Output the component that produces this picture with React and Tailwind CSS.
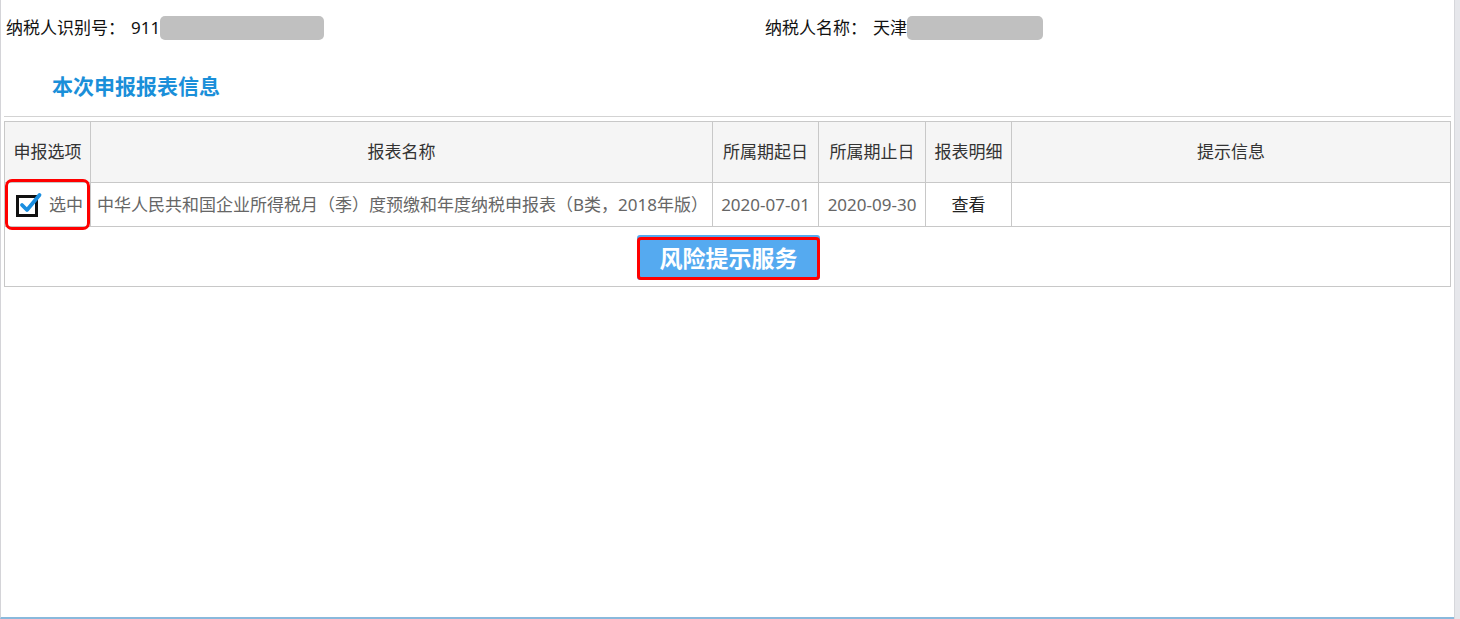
import React from "react";

const font = { fontFamily: '"Noto Sans", "Noto Sans CJK SC", sans-serif' };

const columns = [
  { key: "opt", label: "申报选项", width: "w-[86px]" },
  { key: "name", label: "报表名称", width: "w-[622px]" },
  { key: "start", label: "所属期起日", width: "w-[106px]" },
  { key: "end", label: "所属期止日", width: "w-[107px]" },
  { key: "detail", label: "报表明细", width: "w-[86px]" },
  { key: "tip", label: "提示信息", width: "" },
];

const CheckedBox = () => (
  <svg width="28" height="28" viewBox="0 0 28 28" className="shrink-0">
    <rect x="1.5" y="5.5" width="19" height="19" fill="#fff" stroke="#111" strokeWidth="3" />
    <path d="M6 14 L11 19 L23.5 4" fill="none" stroke="#1a8ee0" strokeWidth="3.8" strokeLinecap="round" strokeLinejoin="round" />
  </svg>
);

const App = () => {
  return (
    <div className="w-[1460px] h-[619px] flex bg-white text-[#333]" style={font}>
      {/* main panel */}
      <div className="w-[1454px] h-full flex flex-col border-l border-[#d4d4d8] border-b-2 border-b-[#8ab9dc]">
        {/* taxpayer header */}
        <div className="flex items-center h-[56px] pl-[5px] text-[17px] text-[#111]">
          <div className="flex items-center w-[759px]">
            <span>纳税人识别号：</span>
            <span className="ml-[6px]">911</span>
            <span className="inline-block w-[164px] h-[24px] rounded-[5px] bg-[#c0c0c0]" />
          </div>
          <div className="flex items-center">
            <span>纳税人名称：</span>
            <span className="ml-[6px]">天津</span>
            <span className="inline-block w-[136px] h-[24px] rounded-[5px] bg-[#c0c0c0]" />
          </div>
        </div>

        {/* section title */}
        <div className="h-[60px] pl-[51px] pt-[15px]">
          <h2 className="text-[21px] font-bold text-[#1a8fd9] leading-[30px]">本次申报报表信息</h2>
        </div>

        <div className="mx-[3px] border-t border-[#d3d3d3]" />

        {/* table */}
        <div className="mt-[4px] ml-[3px] w-[1447px] border border-[#c8c8c8] text-[17px]">
          <div className="flex h-[61px] bg-[#f5f5f5] border-b border-[#c8c8c8]">
            {columns.map((c, i) => (
              <div
                key={c.key}
                className={`${c.width || "flex-1"} flex items-center justify-center ${i < columns.length - 1 ? "border-r border-[#c8c8c8]" : ""}`}
              >
                {c.label}
              </div>
            ))}
          </div>

          <div className="flex h-[44px] border-b border-[#c8c8c8] text-[#666]">
            <div className="w-[86px] border-r border-[#c8c8c8] relative flex items-center pl-[11px] gap-[5px]">
              <div className="absolute left-[0px] right-[0px] top-[-4px] bottom-[-4px] border-[3px] border-[#ff0000] rounded-[7px]" />
              <CheckedBox />
              <span>选中</span>
            </div>
            <div className="w-[622px] border-r border-[#c8c8c8] flex items-center pl-[6px]">
              中华人民共和国企业所得税月（季）度预缴和年度纳税申报表（B类，2018年版）
            </div>
            <div className="w-[106px] border-r border-[#c8c8c8] flex items-center justify-center">2020-07-01</div>
            <div className="w-[107px] border-r border-[#c8c8c8] flex items-center justify-center">2020-09-30</div>
            <div className="w-[86px] border-r border-[#c8c8c8] flex items-center justify-center text-[#222]">查看</div>
            <div className="flex-1" />
          </div>

          <div className="h-[59px] flex justify-center pt-[8px]">
            <div className="ml-[2px] w-[183px] h-[45px] bg-[#55aaf0] rounded-[3px] pt-[2px]">
              <button className="w-full h-[43px] bg-[#55aaf0] rounded-[4px] border-[3px] border-[#ff0000] text-white text-[23px] font-bold leading-none flex items-center justify-center">
                风险提示服务
              </button>
            </div>
          </div>
        </div>

        <div className="flex-1" />
      </div>

      {/* scrollbar strip */}
      <div className="flex-1 h-full bg-[#e6e7eb] border-l border-[#d6d7db]" />
    </div>
  );
};

export default App;
